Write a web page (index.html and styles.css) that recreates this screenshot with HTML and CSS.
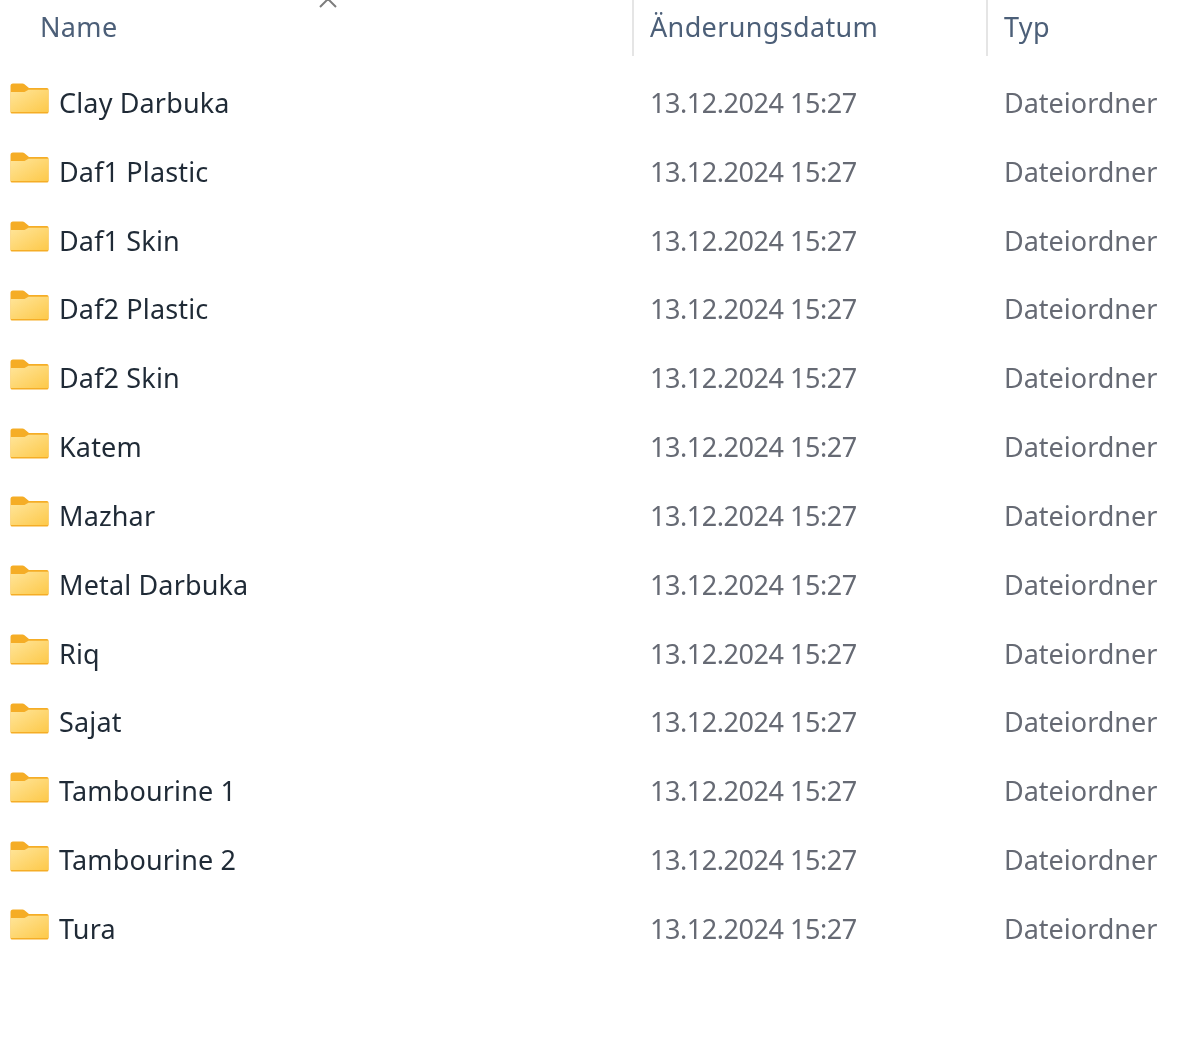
FILE: index.html
```html
<!DOCTYPE html>
<html lang="de">
<head>
<meta charset="utf-8">
<title>Ordner</title>
<link rel="stylesheet" href="styles.css">
</head>
<body>
<svg class="defs" width="0" height="0" aria-hidden="true">
  <defs>
    <linearGradient id="fg" x1="0" y1="0" x2="1" y2="1">
      <stop offset="0" stop-color="#ffe59a"/>
      <stop offset="1" stop-color="#fdc94a"/>
    </linearGradient>
    <symbol id="folder" viewBox="0 0 39 32">
      <path d="M0.500 29V3a2.500 2.500 0 0 1 2.500-2.500h9.500a3 3 0 0 1 2 .8L19 5h18a1.500 1.500 0 0 1 1.500 1.500V29a1.500 1.500 0 0 1-1.500 1.500H2A1.500 1.500 0 0 1 .5 29z" fill="#f5ad26"/>
      <path d="M0.500 28.500V9H14.500l4-2.200h20V28.500a.5 .5 0 0 1-.5 .5H1a.5 .5 0 0 1-.5-.5z" fill="url(#fg)"/>
    </symbol>
  </defs>
</svg>
<main class="list">
  <header class="head">
    <div class="hcell hname">Name
      <svg class="sort" width="24" height="8" viewBox="0 0 24 8"><path d="M4 7l8-8 8 8" fill="none" stroke="#7d7d7d" stroke-width="2"/></svg>
    </div>
    <div class="hcell hdate">Änderungsdatum</div>
    <div class="hcell htype">Typ</div>
  </header>
  <div class="row"><div class="name"><svg class="ico"><use href="#folder"/></svg>Clay Darbuka</div><div class="date">13.12.2024 15:27</div><div class="type">Dateiordner</div></div>
  <div class="row"><div class="name"><svg class="ico"><use href="#folder"/></svg>Daf1 Plastic</div><div class="date">13.12.2024 15:27</div><div class="type">Dateiordner</div></div>
  <div class="row"><div class="name"><svg class="ico"><use href="#folder"/></svg>Daf1 Skin</div><div class="date">13.12.2024 15:27</div><div class="type">Dateiordner</div></div>
  <div class="row"><div class="name"><svg class="ico"><use href="#folder"/></svg>Daf2 Plastic</div><div class="date">13.12.2024 15:27</div><div class="type">Dateiordner</div></div>
  <div class="row"><div class="name"><svg class="ico"><use href="#folder"/></svg>Daf2 Skin</div><div class="date">13.12.2024 15:27</div><div class="type">Dateiordner</div></div>
  <div class="row"><div class="name"><svg class="ico"><use href="#folder"/></svg>Katem</div><div class="date">13.12.2024 15:27</div><div class="type">Dateiordner</div></div>
  <div class="row"><div class="name"><svg class="ico"><use href="#folder"/></svg>Mazhar</div><div class="date">13.12.2024 15:27</div><div class="type">Dateiordner</div></div>
  <div class="row"><div class="name"><svg class="ico"><use href="#folder"/></svg>Metal Darbuka</div><div class="date">13.12.2024 15:27</div><div class="type">Dateiordner</div></div>
  <div class="row"><div class="name"><svg class="ico"><use href="#folder"/></svg>Riq</div><div class="date">13.12.2024 15:27</div><div class="type">Dateiordner</div></div>
  <div class="row"><div class="name"><svg class="ico"><use href="#folder"/></svg>Sajat</div><div class="date">13.12.2024 15:27</div><div class="type">Dateiordner</div></div>
  <div class="row"><div class="name"><svg class="ico"><use href="#folder"/></svg>Tambourine 1</div><div class="date">13.12.2024 15:27</div><div class="type">Dateiordner</div></div>
  <div class="row"><div class="name"><svg class="ico"><use href="#folder"/></svg>Tambourine 2</div><div class="date">13.12.2024 15:27</div><div class="type">Dateiordner</div></div>
  <div class="row"><div class="name"><svg class="ico"><use href="#folder"/></svg>Tura</div><div class="date">13.12.2024 15:27</div><div class="type">Dateiordner</div></div>
</main>
</body>
</html>
```
FILE: styles.css
```css
html, body {
  margin: 0;
  background: #fff;
}
body {
  width: 1200px;
  height: 1040px;
  overflow: hidden;
  font-family: "Noto Sans", "Open Sans", sans-serif;
  font-size: 27px;
}
.defs {
  position: absolute;
}
.list {
  filter: blur(0.7px);
}
.head {
  display: grid;
  grid-template-columns: 632px 354px 214px;
  height: 56px;
  margin-bottom: 12px;
  color: #4c5f78;
}
.hcell {
  display: flex;
  align-items: center;
  height: 56px;
  padding-bottom: 4px;
  box-sizing: border-box;
  letter-spacing: 0.35px;
}
.hname {
  position: relative;
  padding-left: 40px;
}
.hdate, .htype {
  padding-left: 16px;
  border-left: 2px solid #e5e5e5;
}
.sort {
  position: absolute;
  left: 316px;
  top: 0;
}
.row {
  display: grid;
  grid-template-columns: 650px 354px 196px;
  align-items: center;
  height: 68.83px;
}
.name {
  display: flex;
  align-items: center;
  padding-left: 10px;
  color: #1f2a36;
  letter-spacing: 0.15px;
}
.ico {
  width: 39px;
  height: 32px;
  margin: 0 10px 6px 0;
  flex: none;
}
.date, .type {
  color: #666a74;
}
.date {
  letter-spacing: -0.45px;
}
```
